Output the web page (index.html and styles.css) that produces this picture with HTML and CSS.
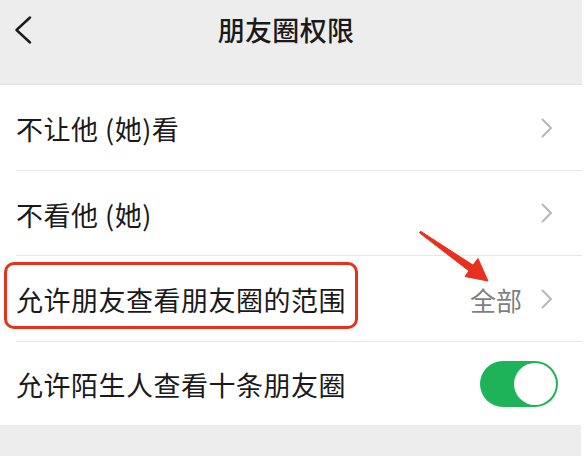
FILE: index.html
```html
<!DOCTYPE html>
<html lang="zh-CN">
<head>
<meta charset="utf-8">
<title>朋友圈权限</title>
<link rel="stylesheet" href="styles.css">
</head>
<body>
<div class="screen">
  <header class="nav">
    <div class="nav-left">
      <svg class="back" width="18" height="28" viewBox="0 0 18 28"><path d="M16 1.5 L2.5 14 L16 26.5" fill="none" stroke="#1a1a1a" stroke-width="2.4" stroke-linecap="round" stroke-linejoin="round"/></svg>
    </div>
    <h1 class="title">朋友圈权限</h1>
    <div class="nav-right"></div>
  </header>
  <ul class="list">
    <li class="row r1">
      <span class="label">不让他 (她)看</span>
      <svg class="chev" width="12" height="20" viewBox="0 0 12 20"><path d="M1.5 1.5 L10 10 L1.5 18.5" fill="none" stroke="#b8b8b8" stroke-width="2" stroke-linecap="round" stroke-linejoin="round"/></svg>
    </li>
    <li class="row r2">
      <span class="label">不看他 (她)</span>
      <svg class="chev" width="12" height="20" viewBox="0 0 12 20"><path d="M1.5 1.5 L10 10 L1.5 18.5" fill="none" stroke="#b8b8b8" stroke-width="2" stroke-linecap="round" stroke-linejoin="round"/></svg>
    </li>
    <li class="row r3">
      <span class="label">允许朋友查看朋友圈的范围</span>
      <span class="value">全部</span>
      <svg class="chev" width="12" height="20" viewBox="0 0 12 20"><path d="M1.5 1.5 L10 10 L1.5 18.5" fill="none" stroke="#b8b8b8" stroke-width="2" stroke-linecap="round" stroke-linejoin="round"/></svg>
    </li>
    <li class="row r4">
      <span class="label">允许陌生人查看十条朋友圈</span>
      <span class="switch"><span class="knob"></span></span>
    </li>
  </ul>
  <div class="footer"></div>
  <div class="highlight"></div>
  <svg class="arrow" width="585" height="456" viewBox="0 0 585 456"><polygon points="419.4,232.8 469,270.9 465,276.5 488,281 478,258.5 473,265.1 420.6,231.2" fill="#e8301e" stroke="#e8301e" stroke-width="1" stroke-linejoin="round"/></svg>
</div>
</body>
</html>
```

FILE: styles.css
```css
* { box-sizing: border-box; }
html, body { margin: 0; padding: 0; background: #ffffff; }
body {
  font-family: "Noto Sans CJK SC", "Noto Sans", sans-serif;
  color: #1a1a1a;
  width: 585px;
  height: 456px;
  overflow: hidden;
}
.screen {
  position: relative;
  width: 585px;
  height: 456px;
  display: flex;
  flex-direction: column;
}
.nav {
  height: 85px;
  background: #ededed;
  margin-right: 3px;
  border-bottom: 1px solid #e2e2e2;
  display: grid;
  grid-template-columns: 1fr auto 1fr;
  align-items: start;
  padding-top: 16px;
  padding-right: 10px;
}
.nav-left { padding-left: 14px; display: flex; }
.back { display: block; }
.title {
  margin: 0;
  font-size: 27px;
  font-weight: 500;
  line-height: 30px;
  margin-top: -1px;
  letter-spacing: 0.3px;
  color: #1a1a1a;
}
.list { list-style: none; margin: 0; padding: 0; margin-right: 3px; }
.row {
  display: flex;
  align-items: center;
  height: 86px;
  margin-left: 16px;
  padding-right: 29px;
  border-bottom: 1px solid #e6e6e6;
}
.r2 { height: 85px; }
.r3 { height: 86px; }
.r4 { height: 83px; border-bottom: none; padding-right: 24px; }
.label {
  flex: 1;
  font-size: 27px;
  letter-spacing: 0.5px;
  line-height: 1;
  padding-top: 2px;
  white-space: nowrap;
}
.value {
  font-size: 26px;
  color: #7f7f7f;
  margin-right: 19px;
  line-height: 1;
  padding-top: 2px;
}
.chev { display: block; flex: none; }
.switch {
  flex: none;
  width: 78px;
  height: 46px;
  border-radius: 23px;
  background: #1db459;
  display: flex;
  justify-content: flex-end;
  align-items: center;
  padding: 2px;
}
.knob {
  width: 42px;
  height: 42px;
  border-radius: 50%;
  background: #ffffff;
}
.footer {
  flex: 1;
  background: #ededed;
  margin-right: 4px;
}
.highlight {
  position: absolute;
  left: 4px;
  top: 262px;
  width: 354px;
  height: 67px;
  border: 3.5px solid #e4321f;
  border-radius: 10px;
}
.arrow {
  position: absolute;
  left: 0;
  top: 0;
  pointer-events: none;
}
```
